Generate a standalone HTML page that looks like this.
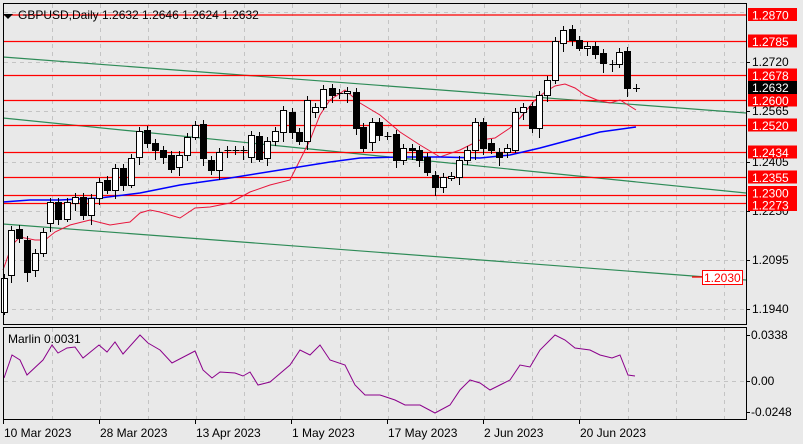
<!DOCTYPE html>
<html><head><meta charset="utf-8"><style>
html,body{margin:0;padding:0;background:#e9e9e9;}
svg{display:block;font-family:"Liberation Sans",sans-serif;}
</style></head><body>
<svg id="s" width="803" height="444" viewBox="0 0 803 444" xmlns="http://www.w3.org/2000/svg">
<rect width="803" height="444" fill="#e9e9e9"/>
<g id="grid" stroke="#c4c4c4" stroke-dasharray="4,4" stroke-width="1"></g>
<g id="lines"></g>
<g id="candles"></g>
<rect x="3.5" y="3.5" width="743" height="321" fill="none" stroke="#000"/>
<rect x="3.5" y="327.5" width="743" height="92" fill="none" stroke="#000"/>
<path d="M3 14 L13 14 L8 19 Z" fill="#000"/>
<text x="18" y="19" font-size="12" fill="#000">GBPUSD,Daily  1.2632 1.2646 1.2624 1.2632</text>
<text x="8" y="343" font-size="12" fill="#000">Marlin 0.0031</text>
<g id="axis" font-size="12"></g>
</svg>
<script>
var NS="http://www.w3.org/2000/svg";
function el(p,t,a,txt){var e=document.createElementNS(NS,t);for(var k in a)e.setAttribute(k,a[k]);if(txt!==undefined)e.textContent=txt;document.getElementById(p).appendChild(e);return e;}
// grid
for(var x=52;x<746;x+=48)el("grid","line",{x1:x+.5,y1:4,x2:x+.5,y2:324});
for(var x=52;x<746;x+=48)el("grid","line",{x1:x+.5,y1:328,x2:x+.5,y2:419});
[12,62,111,162,211,260,309].forEach(function(y){el("grid","line",{x1:4,y1:y+.5,x2:746,y2:y+.5});});
el("grid","line",{x1:4,y1:381.5,x2:746,y2:381.5});
// green trendlines
el("lines","line",{x1:3,y1:57,x2:746,y2:113,stroke:"#2e8b57","stroke-width":1.2});
el("lines","line",{x1:3,y1:118,x2:746,y2:193,stroke:"#2e8b57","stroke-width":1.2});
el("lines","line",{x1:3,y1:224,x2:746,y2:280,stroke:"#2e8b57","stroke-width":1.2});
// red horizontals
[15,41.5,75.5,100.5,125.5,152.5,177.5,195.5,203.5].forEach(function(y){el("lines","line",{x1:4,y1:y,x2:746,y2:y,stroke:"#ff0000","stroke-width":1.3});});
el("lines","line",{x1:692,y1:277,x2:703,y2:277,stroke:"#ff0000","stroke-width":1.3});
// MAs
el("lines","polyline",{fill:"none",stroke:"#e8163c","stroke-width":1,points:"3,270 12,245 20,237 35,240 45,240 55,232 70,225 90,220 110,225 130,222 140,213 150,210 160,212 180,218 195,208 210,207 230,203 250,192 270,185 290,180 300,160 310,140 320,115 330,100 345,90 360,103 380,115 400,132 420,145 440,157 460,150 480,140 495,138 510,128 520,118 535,100 545,92 555,86 565,84 575,88 585,95 597,100 610,103 620,100 636,110"});
el("lines","polyline",{fill:"none",stroke:"#0000ff","stroke-width":1.5,points:"3,202 30,200 60,200 100,198 140,193 180,185 230,178 280,170 330,162 360,158 400,157 440,157 480,158 510,155 540,148 570,140 600,132 636,127"});
// candles [x,o,c]
var C=[[4,312,278],[11,275,230],[19,229,238],[27,240,272],[35,270,253],[43,253,232],[50,223,202],[58,202,219],[67,219,202],[75,203,197],[83,197,215],[91,215,198],[99,198,182],[107,180,190],[115,190,168],[123,168,185],[131,185,158],[139,157,131],[147,130,143],[155,143,150],[163,150,157],[171,155,169],[179,167,155],[187,155,137],[195,137,125],[203,124,158],[211,160,170],[219,170,152],[227,150,151],[235,150,151],[243,150,151],[251,157,135],[259,136,159],[267,158,141],[275,141,131],[283,132,110],[292,112,132],[299,132,141],[307,141,100],[315,112,107],[323,107,89],[332,88,95],[339,93,94],[347,93,91],[356,92,128],[363,127,148],[372,142,122],[379,122,135],[387,136,137],[396,134,160],[403,160,148],[412,148,150],[419,150,160],[427,157,172],[435,175,187],[443,187,177],[451,178,176],[459,177,160],[467,160,150],[475,150,122],[483,122,148],[491,143,150],[499,152,157],[507,152,148],[515,150,112],[523,112,107],[532,106,128],[539,128,95],[547,95,80],[555,80,41],[563,43,30],[572,29,40],[579,40,48],[587,48,46],[595,46,54],[603,53,63],[612,64,65],[619,64,52],[627,51,88]];
C.forEach(function(c,i){var x=c[0]+.5,o=c[1],cl=c[2],t=Math.min(o,cl),b=Math.max(o,cl);var w1=4+(i*7)%7,w2=3+(i*5)%8;
el("candles","line",{x1:x,y1:t-w1,x2:x,y2:b+w2,stroke:"#000"});
if(b-t<1.5){el("candles","line",{x1:x-3,y1:t+.5,x2:x+4,y2:t+.5,stroke:"#000"});}
else el("candles","rect",{x:x-3,y:t+.5,width:6,height:b-t,fill:cl<o?"#fff":"#000",stroke:"#000"});});
el("candles","line",{x1:636.5,y1:84,x2:636.5,y2:92,stroke:"#000"});
el("candles","line",{x1:633,y1:88.5,x2:640,y2:88.5,stroke:"#000"});
// marlin
el("lines","polyline",{fill:"none",stroke:"#8b008b","stroke-width":1,points:"4,378 12,355 20,360 27,375 43,360 52,345 58,353 67,348 75,347 83,358 99,345 107,352 115,342 123,354 140,335 148,343 160,350 172,363 195,351 203,370 212,378 220,372 235,373 243,376 250,372 258,385 270,382 290,365 300,350 310,355 320,345 330,360 345,365 355,385 365,395 380,395 395,400 405,405 420,405 435,413 450,405 460,390 470,380 480,383 490,390 500,385 510,380 520,365 530,367 540,350 555,335 565,340 575,348 590,350 600,355 612,358 620,355 628,375 635,376"});
// axis
var A=[[62,"1.2720"],[111,"1.2565"],[162,"1.2405"],[211,"1.2250"],[260,"1.2095"],[309,"1.1940"]];
A.forEach(function(a){el("axis","line",{x1:746,y1:a[0]+.5,x2:750,y2:a[0]+.5,stroke:"#000"});el("axis","text",{x:752,y:a[0]+4,fill:"#000"},a[1]);});
var R=[[15,"1.2870"],[41.5,"1.2785"],[75.5,"1.2678"],[100.5,"1.2600"],[125.5,"1.2520"],[152.5,"1.2434"],[177.5,"1.2355"],[193,"1.2300"],[205,"1.2273"]];
R.forEach(function(a){el("axis","rect",{x:748,y:a[0]-7,width:49,height:13,fill:"#ff0000"});el("axis","text",{x:752,y:a[0]+4.5,fill:"#fff"},a[1]);});
el("axis","rect",{x:748,y:81,width:49,height:13,fill:"#000"});
el("axis","text",{x:752,y:92,fill:"#fff"},"1.2632");
el("axis","rect",{x:702.5,y:270.5,width:40,height:14,fill:"#fff",stroke:"#ff0000"});
el("axis","text",{x:704,y:282,fill:"#ff0000"},"1.2030");
[[335,"0.0338"],[381,"0.00"],[412,"-0.0248"]].forEach(function(a){el("axis","line",{x1:746,y1:a[0]+.5,x2:750,y2:a[0]+.5,stroke:"#000"});el("axis","text",{x:751,y:a[0]+4,fill:"#000"},a[1]);});
[[3,"10 Mar 2023"],[99,"28 Mar 2023"],[195,"13 Apr 2023"],[291,"1 May 2023"],[387,"17 May 2023"],[483,"2 Jun 2023"],[579,"20 Jun 2023"]].forEach(function(a){el("axis","line",{x1:a[0]+.5,y1:420,x2:a[0]+.5,y2:424,stroke:"#000"});el("axis","text",{x:a[0]+1,y:437,fill:"#000"},a[1]);});
</script>
</body></html>
